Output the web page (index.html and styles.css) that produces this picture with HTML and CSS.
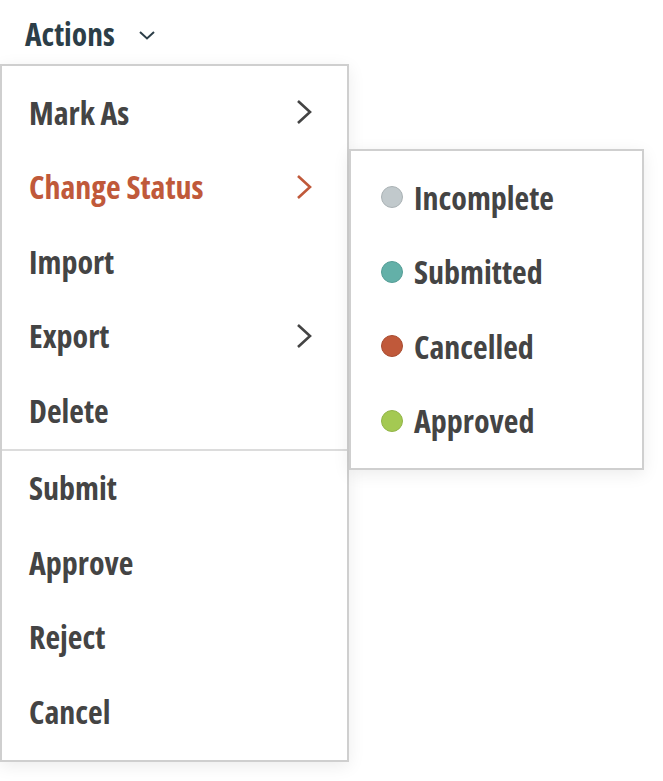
FILE: index.html
```html
<!DOCTYPE html>
<html>
<head>
<meta charset="utf-8">
<link rel="stylesheet" href="styles.css">
</head>
<body>
<div class="page">
  <div class="trigger">
    <span class="trigger-label">Actions</span>
    <svg class="trigger-caret" width="18" height="12" viewBox="0 0 18 12"><path d="M2 3 L9 9.5 L16 3" fill="none" stroke="#2c3e48" stroke-width="2"/></svg>
  </div>
  <div class="menus">
    <div class="menu main-menu">
      <div class="group">
        <div class="item">Mark As<svg class="chev" width="16" height="26" viewBox="0 0 16 26"><path d="M2 2 L14 13 L2 24" fill="none" stroke="currentColor" stroke-width="2.6"/></svg></div>
        <div class="item active">Change Status<svg class="chev" width="16" height="26" viewBox="0 0 16 26"><path d="M2 2 L14 13 L2 24" fill="none" stroke="currentColor" stroke-width="2.6"/></svg></div>
        <div class="item">Import</div>
        <div class="item">Export<svg class="chev" width="16" height="26" viewBox="0 0 16 26"><path d="M2 2 L14 13 L2 24" fill="none" stroke="currentColor" stroke-width="2.6"/></svg></div>
        <div class="item">Delete</div>
      </div>
      <div class="group second">
        <div class="item">Submit</div>
        <div class="item">Approve</div>
        <div class="item">Reject</div>
        <div class="item">Cancel</div>
      </div>
    </div>
    <div class="menu sub-menu">
      <div class="sub-item"><span class="dot grey"></span>Incomplete</div>
      <div class="sub-item"><span class="dot teal"></span>Submitted</div>
      <div class="sub-item"><span class="dot rust"></span>Cancelled</div>
      <div class="sub-item"><span class="dot green"></span>Approved</div>
    </div>
  </div>
</div>
</body>
</html>
```
FILE: styles.css
```css
html, body {
  margin: 0;
  padding: 0;
  background: #fff;
}
body {
  font-family: "Open Sans", "DejaVu Sans", sans-serif;
  font-stretch: 75%;
  font-weight: 700;
  color: #444;
}
.page {
  width: 663px;
  height: 781px;
}
.trigger {
  display: flex;
  align-items: center;
  height: 64px;
  padding-left: 25px;
  box-sizing: border-box;
  color: #2c3e48;
}
.trigger-label {
  font-size: 31.5px;
  line-height: 1;
  margin-top: 4px;
}
.trigger-caret {
  margin-left: 23px;
  margin-top: 6px;
}
.menus {
  display: flex;
  align-items: flex-start;
}
.menu {
  background: #fff;
  border: 2px solid #cfcfcf;
  box-shadow: 0 4px 16px rgba(0,0,0,0.08);
}
.main-menu {
  width: 345px;
  padding: 9px 0 11px;
}
.group.second {
  border-top: 2px solid #dcdcdc;
  margin-top: 1px;
  padding-top: 0;
}
.item {
  display: flex;
  align-items: center;
  justify-content: space-between;
  height: 74.5px;
  padding: 0 35px 0 27px;
  font-size: 32px;
  color: #444;
}
.item.active {
  color: #c0593a;
}
.chev {
  flex: none;
}
.sub-menu {
  width: 291px;
  margin-top: 85px;
  padding: 9px 0 10px;
}
.sub-item {
  display: flex;
  align-items: center;
  height: 74.5px;
  padding-left: 30px;
  font-size: 32px;
}
.dot {
  width: 20px;
  height: 20px;
  border-radius: 50%;
  margin-right: 11px;
  flex: none;
}
.dot.grey { background: #c1c9cc; border: 1px solid #aab2b5; }
.dot.teal { background: #63b0a8; border: 1px solid #559d96; }
.dot.rust { background: #c0593a; border: 1px solid #a94c30; }
.dot.green { background: #a4c952; border: 1px solid #92b548; }
```
